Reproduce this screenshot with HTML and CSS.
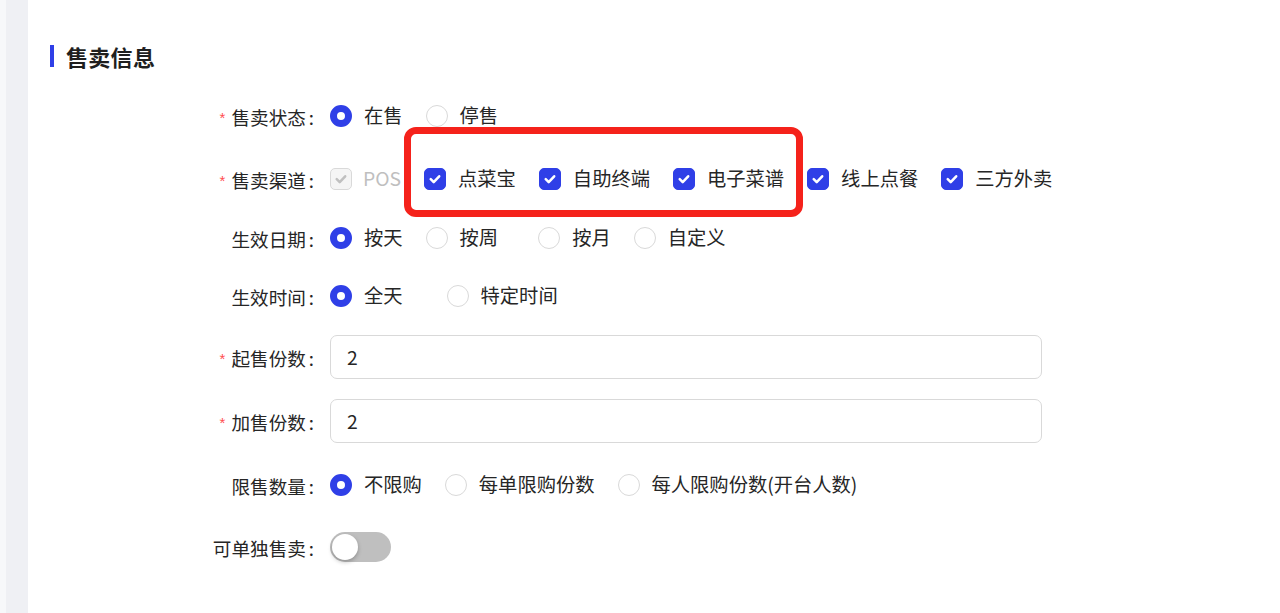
FILE: index.html
```html
<!DOCTYPE html>
<html lang="zh-CN">
<head>
<meta charset="utf-8">
<title>售卖信息</title>
<link rel="stylesheet" href="styles.css">
</head>
<body>
<div class="page">
  <div class="edge"></div>
  <div class="gutter"></div>
  <main class="content">
    <h2 class="section-title"><span class="title-bar"></span>售卖信息</h2>

    <div class="form">
      <div class="row">
        <label class="label"><span class="req">*</span>售卖状态<span class="colon">:</span></label>
        <div class="control">
          <span class="opt"><span class="radio checked"></span><span class="opt-text">在售</span></span>
          <span class="opt"><span class="radio"></span><span class="opt-text">停售</span></span>
        </div>
      </div>

      <div class="row row-channel">
        <label class="label"><span class="req">*</span>售卖渠道<span class="colon">:</span></label>
        <div class="control">
          <span class="opt disabled"><span class="checkbox"><svg viewBox="0 0 22 22"><path d="M6.3 11.2l3.3 3.2 6-6.4"/></svg></span><span class="opt-text">POS</span></span>
          <span class="highlight">
            <span class="opt"><span class="checkbox on"><svg viewBox="0 0 22 22"><path d="M6.3 11.2l3.3 3.2 6-6.4"/></svg></span><span class="opt-text">点菜宝</span></span>
            <span class="opt"><span class="checkbox on"><svg viewBox="0 0 22 22"><path d="M6.3 11.2l3.3 3.2 6-6.4"/></svg></span><span class="opt-text">自助终端</span></span>
            <span class="opt"><span class="checkbox on"><svg viewBox="0 0 22 22"><path d="M6.3 11.2l3.3 3.2 6-6.4"/></svg></span><span class="opt-text">电子菜谱</span></span>
          </span>
          <span class="opt"><span class="checkbox on"><svg viewBox="0 0 22 22"><path d="M6.3 11.2l3.3 3.2 6-6.4"/></svg></span><span class="opt-text">线上点餐</span></span>
          <span class="opt"><span class="checkbox on"><svg viewBox="0 0 22 22"><path d="M6.3 11.2l3.3 3.2 6-6.4"/></svg></span><span class="opt-text">三方外卖</span></span>
        </div>
      </div>

      <div class="row row-compact">
        <label class="label">生效日期<span class="colon">:</span></label>
        <div class="control">
          <span class="opt"><span class="radio checked"></span><span class="opt-text">按天</span></span>
          <span class="opt wide-a"><span class="radio"></span><span class="opt-text">按周</span></span>
          <span class="opt"><span class="radio"></span><span class="opt-text">按月</span></span>
          <span class="opt"><span class="radio"></span><span class="opt-text">自定义</span></span>
        </div>
      </div>

      <div class="row row-compact">
        <label class="label">生效时间<span class="colon">:</span></label>
        <div class="control">
          <span class="opt wide-b"><span class="radio checked"></span><span class="opt-text">全天</span></span>
          <span class="opt"><span class="radio"></span><span class="opt-text">特定时间</span></span>
        </div>
      </div>

      <div class="row row-input">
        <label class="label"><span class="req">*</span>起售份数<span class="colon">:</span></label>
        <div class="control">
          <input class="input" type="text" value="2">
        </div>
      </div>

      <div class="row row-input">
        <label class="label"><span class="req">*</span>加售份数<span class="colon">:</span></label>
        <div class="control">
          <input class="input" type="text" value="2">
        </div>
      </div>

      <div class="row row-limit">
        <label class="label">限售数量<span class="colon">:</span></label>
        <div class="control">
          <span class="opt"><span class="radio checked"></span><span class="opt-text">不限购</span></span>
          <span class="opt"><span class="radio"></span><span class="opt-text">每单限购份数</span></span>
          <span class="opt"><span class="radio"></span><span class="opt-text">每人限购份数(开台人数)</span></span>
        </div>
      </div>

      <div class="row row-switch">
        <label class="label">可单独售卖<span class="colon">:</span></label>
        <div class="control">
          <span class="switch"><span class="knob"></span></span>
        </div>
      </div>
    </div>
  </main>
</div>
</body>
</html>
```

FILE: styles.css
```css
* { box-sizing: border-box; }

html, body {
  margin: 0;
  padding: 0;
  height: 100%;
  background: #ffffff;
}

body {
  font-family: "Noto Sans CJK SC", "Noto Sans", "Liberation Sans", sans-serif;
  color: #262626;
  font-size: 19.3px;
}

.page {
  display: flex;
  min-height: 613px;
}

.edge {
  flex: 0 0 6px;
  background: #f7f8fa;
}

.gutter {
  flex: 0 0 22px;
  background: #eff0f4;
}

.content {
  flex: 1;
  padding: 42px 0 0 22px;
  background: #ffffff;
}

.section-title {
  display: flex;
  align-items: center;
  margin: 0;
  height: 28px;
  font-size: 22px;
  font-weight: 600;
  color: #1f1f1f;
  letter-spacing: 0.3px;
}

.title-bar {
  width: 4px;
  height: 22px;
  background: #2f3fe7;
  margin-right: 12px;
}

.form {
  margin-top: 26px;
  display: flex;
  flex-direction: column;
  gap: 20px;
}

.row {
  display: flex;
  align-items: center;
  height: 40px;
}

.row-channel {
  margin-top: 3px;
}

.row-compact {
  height: 38px;
}

.row-limit {
  margin-top: 2px;
}

.row-switch {
  margin-top: 2px;
}

.row-input {
  height: 44px;
}

.label {
  flex: 0 0 270px;
  text-align: right;
  padding-right: 6px;
  white-space: nowrap;
  color: #262626;
  font-size: 18.6px;
}

.req {
  color: #ff4d4f;
  font-size: 15px;
  margin-right: 6px;
  font-family: "Liberation Sans", sans-serif;
  position: relative;
  top: -2px;
}

.colon {
  margin-left: 3px;
}

.control {
  display: flex;
  align-items: center;
  margin-left: 10px;
}

.opt {
  display: inline-flex;
  align-items: center;
  margin-right: 23px;
  white-space: nowrap;
}

.opt.wide-a { margin-right: 40px; }
.opt.wide-b { margin-right: 44px; }

.opt-text {
  margin-left: 12px;
  line-height: 1;
}

.radio {
  width: 22px;
  height: 22px;
  border-radius: 50%;
  border: 1.5px solid #d9d9d9;
  background: #ffffff;
  flex: 0 0 22px;
}

.radio.checked {
  border: 7px solid #2f3fe7;
}

.checkbox {
  width: 22px;
  height: 22px;
  border-radius: 5px;
  border: 1.5px solid #d9d9d9;
  background: #f5f5f5;
  flex: 0 0 22px;
  display: flex;
  align-items: center;
  justify-content: center;
}

.checkbox svg {
  width: 22px;
  height: 22px;
  fill: none;
  stroke: #c0c0c0;
  stroke-width: 2.8;
  stroke-linecap: round;
  stroke-linejoin: round;
}

.checkbox.on {
  background: #2f3fe7;
  border-color: #2f3fe7;
}

.checkbox.on svg {
  stroke: #ffffff;
}

.opt.disabled .opt-text {
  color: #bfbfbf;
  margin-left: 11px;
}

.highlight {
  position: relative;
  display: inline-flex;
  align-items: center;
  height: 40px;
}

.highlight::after {
  content: "";
  position: absolute;
  left: -20px;
  right: 4px;
  top: -32px;
  bottom: -18px;
  border: 7px solid #f5221b;
  border-radius: 12px;
  pointer-events: none;
}

.input {
  width: 712px;
  height: 44px;
  border: 1.5px solid #d9d9d9;
  border-radius: 7px;
  padding: 0 16px;
  font-family: "Noto Sans CJK SC", "Noto Sans", "Liberation Sans", sans-serif;
  font-size: 19.3px;
  color: #262626;
  background: #ffffff;
  outline: none;
}

.switch {
  position: relative;
  display: inline-block;
  width: 61px;
  height: 30px;
  border-radius: 15px;
  background: #bfbfbf;
}

.knob {
  position: absolute;
  left: 2px;
  top: 2px;
  width: 26px;
  height: 26px;
  border-radius: 50%;
  background: #ffffff;
  box-shadow: 0 2px 4px rgba(0, 0, 0, 0.25);
}
```
